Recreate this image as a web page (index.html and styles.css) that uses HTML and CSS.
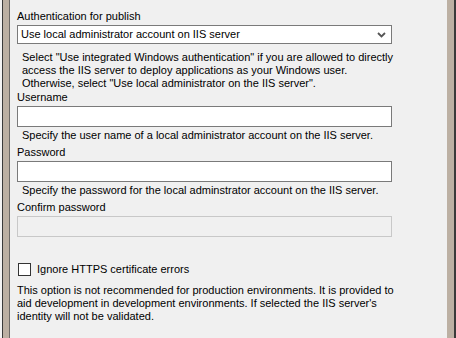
FILE: index.html
```html
<!DOCTYPE html>
<html lang="en">
<head>
  <meta charset="UTF-8">
  <title>Publish settings</title>
  <link rel="stylesheet" href="styles.css">
</head>
<body>
  <div class="frame">
    <div class="edge-left"></div>
    <div class="panel">
      <label class="field-label">Authentication for publish</label>
      <div class="select">
        <span>Use local administrator account on IIS server</span>
        <svg class="chevron" width="9" height="6" viewBox="0 0 9 6">
          <path d="M1 1 L4.5 4.5 L8 1" fill="none" stroke="#555" stroke-width="1.8"/>
        </svg>
      </div>
      <p class="hint hint-first">Select "Use integrated Windows authentication" if you are allowed to directly<br>access the IIS server to deploy applications as your Windows user.<br>Otherwise, select "Use local administrator on the IIS server".</p>

      <label class="field-label">Username</label>
      <div class="textbox"></div>
      <p class="hint">Specify the user name of a local administrator account on the IIS server.</p>

      <label class="field-label">Password</label>
      <div class="textbox"></div>
      <p class="hint">Specify the password for the local adminstrator account on the IIS server.</p>

      <label class="field-label">Confirm password</label>
      <div class="textbox disabled"></div>

      <div class="check-row">
        <span class="checkbox"></span>
        <span>Ignore HTTPS certificate errors</span>
      </div>
      <p class="note">This option is not recommended for production environments. It is provided to<br>aid development in development environments. If selected the IIS server's<br>identity will not be validated.</p>
    </div>
    <div class="edge-right"></div>
  </div>
</body>
</html>
```

FILE: styles.css
```css
body {
  margin: 0;
  font-family: 'Liberation Sans', Arial, sans-serif;
  font-size: 11px;
  line-height: 13px;
  color: #000;
  background-color: #f0f0f0;
}
.frame {
  display: flex;
  height: 338px;
}
.edge-left {
  width: 7px;
  border-left: 2px solid #f4f4f4;
  border-right: 1px solid #6d6a67;
  background-color: #bcb0a3;
  box-shadow: inset 1px 0 0 #3a3a3a;
}
.edge-right {
  width: 7px;
  background-color: #bcb0a3;
  border-right: 2px solid #3a3a3a;
}
.panel {
  flex: 1;
  padding: 10px 0 0 7px;
  background-color: #f0f0f0;
}
.field-label {
  display: block;
  width: 375px;
}
.select {
  box-sizing: border-box;
  width: 375px;
  height: 19px;
  margin-top: 2px;
  border: 1px solid #7a7a7a;
  background-color: #fff;
  display: flex;
  align-items: center;
  justify-content: space-between;
  padding: 0 3px 0 3px;
}
.chevron {
  margin-right: 2px;
}
.textbox {
  box-sizing: border-box;
  width: 375px;
  height: 21px;
  margin-top: 2px;
  border: 1px solid #7a7a7a;
  background-color: #fff;
}
.textbox.disabled {
  border-color: #c8c8c8;
  background-color: #f0f0f0;
}
.hint {
  margin: 2px 0 4px 0;
  padding-left: 5px;
  white-space: nowrap;
}
.hint-first {
  margin-top: 7px;
  margin-bottom: 1px;
}
.check-row {
  display: flex;
  align-items: center;
  gap: 6px;
  margin-top: 26px;
  margin-left: 1px;
}
.checkbox {
  box-sizing: border-box;
  width: 13px;
  height: 13px;
  border: 1px solid #333;
  background-color: #fff;
}
.note {
  margin: 8px 0 0 0;
  white-space: nowrap;
}
```
